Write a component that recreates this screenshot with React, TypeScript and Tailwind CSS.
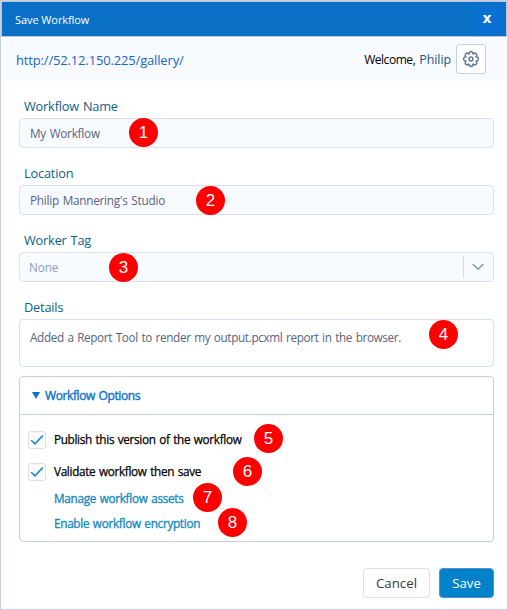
import React from "react";

const badgeSpots: { n: number; pos: string }[] = [
  { n: 1, pos: "left-[129px] top-[118px]" },
  { n: 2, pos: "left-[196px] top-[186px]" },
  { n: 3, pos: "left-[109px] top-[253px]" },
  { n: 4, pos: "left-[429px] top-[320px]" },
  { n: 5, pos: "left-[254px] top-[424px]" },
  { n: 6, pos: "left-[233px] top-[457px]" },
  { n: 7, pos: "left-[193px] top-[483px]" },
  { n: 8, pos: "left-[218px] top-[508px]" },
];

const gearTeeth = [0, 45, 90, 135, 180, 225, 270, 315];

function Badge({ n, pos }: { n: number; pos: string }) {
  return (
    <span
      className={`absolute flex h-[29px] w-[29px] items-center justify-center rounded-full bg-[#ff0000] pb-px font-['Liberation_Sans',sans-serif] text-[17px] leading-none text-white ${pos}`}
    >
      {n}
    </span>
  );
}

function Label({ children }: { children: React.ReactNode }) {
  return (
    <div className="flex h-[23px] items-center pl-[5px] text-[12.75px] tracking-[-0.18px] text-[#0d6186] [word-spacing:0.8px]">
      {children}
    </div>
  );
}

function Field({ label, value }: { label: string; value: string }) {
  return (
    <div className="mb-[14px]">
      <Label>{label}</Label>
      <div className="flex h-[30px] items-center rounded-[4px] border border-[#d9e0ef] bg-[#f7fbff] pt-[2px] pl-[10px] text-[11.75px] tracking-[-0.24px] text-[#596380] [word-spacing:0.9px]">
        {value}
      </div>
    </div>
  );
}

function Gear() {
  return (
    <svg width="18" height="18" viewBox="0 0 18 18" fill="none" stroke="#65779a" strokeWidth="1.5" strokeLinecap="round">
      {gearTeeth.map((angle) => (
        <path key={angle} d="M6.82 3.75C7.5.8 10.5.8 11.18 3.75" transform={`rotate(${angle} 9 9)`} />
      ))}
      <circle cx="9" cy="9" r="1.9" />
    </svg>
  );
}

function CheckRow({ children }: { children: React.ReactNode }) {
  return (
    <div className="flex h-[18px] items-center">
      <span className="flex h-[18px] w-[18px] items-center justify-center rounded-[3px] border border-[#d9e0ef] bg-[#fbfdff]">
        <svg width="14" height="12" viewBox="0 0 14 12" fill="none" stroke="#1a8cc9" strokeWidth="1.6">
          <path d="M1.2 6.2 4.9 9.8 12.8 1.6" />
        </svg>
      </span>
      <span className="ml-[8px] text-[11.75px] tracking-[-0.33px] text-black [-webkit-text-stroke:0.25px_black] [word-spacing:0.9px]">
        {children}
      </span>
    </div>
  );
}

export default function App() {
  return (
    <div className="relative h-[610px] w-[508px] overflow-hidden border border-[#c5cee3] bg-white font-['Open_Sans','Noto_Sans',sans-serif] whitespace-nowrap">
      <header className="flex h-[36px] items-center justify-between border border-[#b9c6d8] bg-[#0a70c6] pr-[5px] pl-[13px] text-white">
        <span className="mt-[3px] text-[11px] tracking-[-0.08px]">Save Workflow</span>
        <button className="flex h-[28px] w-[28px] items-center justify-center bg-[#0a70d2] pb-[2px] font-['DejaVu_Sans',sans-serif] text-[14px] leading-none font-bold">
          x
        </button>
      </header>

      <div className="mx-[3px] flex h-[44px] items-center bg-[#f7fbff] pr-[18px] pl-[12px]">
        <span className="mt-[3px] text-[13px] tracking-[-0.16px] text-[#1a66c2]">http://52.12.150.225/gallery/</span>
        <span className="mt-[2px] ml-auto text-[12px] tracking-[-0.45px] text-black">Welcome,</span>
        <span className="mt-[2px] ml-[4px] text-[12.5px] tracking-[-0.1px] text-[#24567e]">Philip</span>
        <button className="ml-[5px] flex h-[30px] w-[30px] items-center justify-center rounded-[3px] border border-[#c5cfe4] bg-white">
          <Gear />
        </button>
      </div>

      <main className="pt-[14px] pr-[13px] pl-[18px]">
        <Field label="Workflow Name" value="My Workflow" />
        <Field label="Location" value="Philip Mannering's Studio" />

        <div className="mb-[14px]">
          <Label>Worker Tag</Label>
          <div className="flex h-[30px] items-center rounded-[4px] border border-[#d9e0ef] bg-[#f7fbff] pl-[9px] text-[11.75px] tracking-[-0.1px] text-[#8c9abb]">
            <span className="flex-1 pt-[2px]">None</span>
            <span className="flex h-[22px] w-[30px] items-center justify-center border-l border-[#d3dcec] pr-px">
              <svg width="12" height="8" viewBox="0 0 12 8" fill="none" stroke="#8594b8" strokeWidth="1.5">
                <path d="M.7 1 6 6.3 11.3 1" />
              </svg>
            </span>
          </div>
        </div>

        <Label>Details</Label>
        <div className="h-[48px] rounded-[4px] border border-[#d9e0ef] bg-white pt-[9px] pl-[10px] text-[11.75px] leading-[16px] tracking-[-0.36px] text-[#596380] [word-spacing:0.9px]">
          Added a Report Tool to render my output.pcxml report in the browser.
        </div>

        <section className="mt-[9px] h-[166px] rounded-[4px] border border-[#c5cfe4]">
          <div className="flex h-[38px] items-center border-b border-[#c5cfe4] pl-[12px] text-[#0b72cd]">
            <svg width="8" height="7" viewBox="0 0 8 7" fill="#0b72cd">
              <path d="M0 0h8L4 7z" />
            </svg>
            <span className="ml-[5px] text-[12px] tracking-[-0.4px] [-webkit-text-stroke:0.4px_#0b72cd] [word-spacing:0.9px]">Workflow Options</span>
          </div>
          <div className="flex flex-col gap-[14px] pt-[16px] pl-[8px]">
            <CheckRow>Publish this version of the workflow</CheckRow>
            <CheckRow>Validate workflow then save</CheckRow>
          </div>
          <div className="mt-[5px] flex flex-col pl-[34px] text-[11.75px] leading-[25px] tracking-[-0.3px] text-[#188bc0] [-webkit-text-stroke:0.35px_#188bc0] [word-spacing:0.9px]">
            <span>Manage workflow assets</span>
            <span>Enable workflow encryption</span>
          </div>
        </section>

        <footer className="mt-[26px] flex justify-end gap-[9px] text-[13.25px]">
          <button className="flex h-[30px] w-[67px] items-center justify-center rounded-[4px] border border-[#d9e0ef] bg-white pt-px text-[#33373d]">
            Cancel
          </button>
          <button className="flex h-[30px] w-[55px] items-center justify-center rounded-[4px] border border-[#5a8fc3] bg-[#0082ca] pt-px text-white">
            Save
          </button>
        </footer>
      </main>

      <div className="absolute -top-px -left-px">
        {badgeSpots.map((b) => (
          <Badge key={b.n} n={b.n} pos={b.pos} />
        ))}
      </div>
    </div>
  );
}
